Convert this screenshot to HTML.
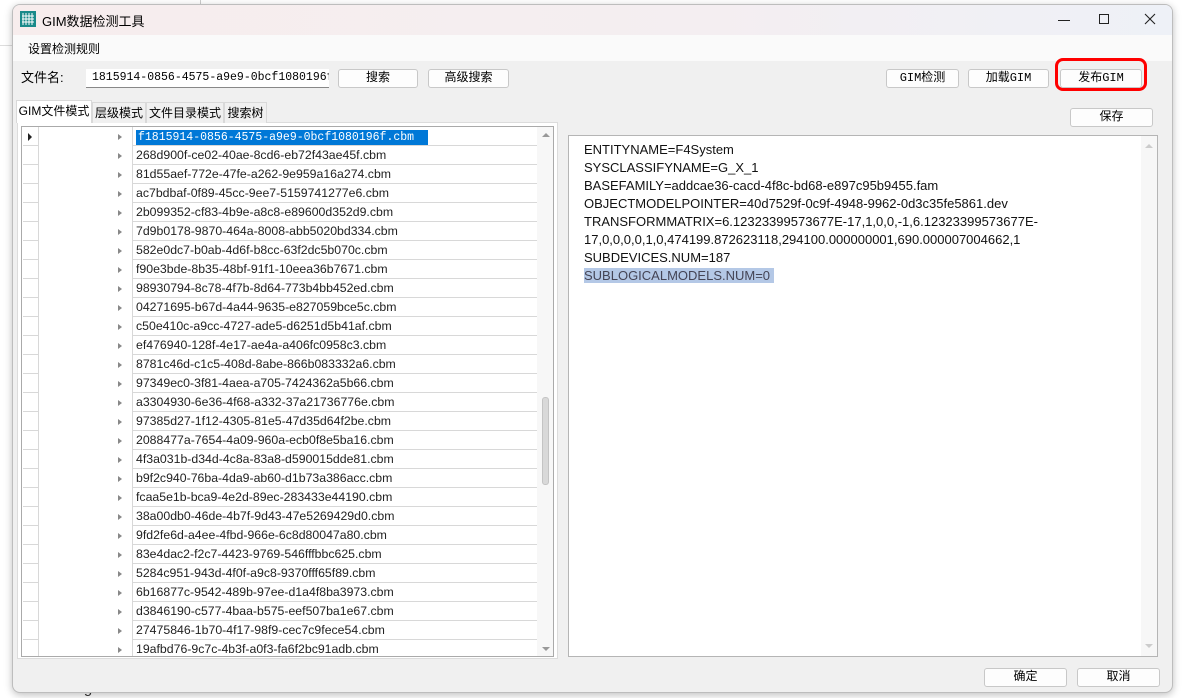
<!DOCTYPE html>
<html><head><meta charset="utf-8"><style>
*{margin:0;padding:0;box-sizing:border-box}
body{width:1184px;height:698px;background:#fff;position:relative;overflow:hidden;font-family:"Liberation Sans","Noto Sans CJK SC",sans-serif;font-size:12px;color:#000}
.a{position:absolute}
.win{left:12px;top:4px;width:1161px;height:689px;background:#f0f0f0;border:1px solid #bdbdbd;border-radius:8px;overflow:hidden;box-shadow:0 2px 8px rgba(0,0,0,.25)}
.btn{position:absolute;background:#fdfdfd;border:1px solid #c8c8c8;border-radius:3px;text-align:center;font-size:12px;line-height:17px;font-family:"Liberation Mono","Noto Sans CJK SC",monospace}
.row{position:absolute;left:0;height:19px;width:535px}
.row .h{position:absolute;left:1px;top:0;width:16px;height:19px;border-bottom:1px solid #d8d8d8;border-right:1px solid #d8d8d8}
.row .t{position:absolute;left:110px;top:0;width:405px;height:19px;border-bottom:1px solid #d8d8d8;border-left:1px solid #d8d8d8;padding-left:3px;line-height:19px;font-size:12.3px;color:#222;white-space:nowrap}
.row .ar{position:absolute;left:96px;top:7px;width:0;height:0;border-left:4px solid #888;border-top:3px solid transparent;border-bottom:3px solid transparent}
.tab{position:absolute;top:97px;height:21px;border:1px solid #d9d9d9;border-bottom:none;background:#f0f0f0;font-size:12px;line-height:20px;text-align:center;white-space:nowrap;overflow:hidden}
.txt{font-size:13px;line-height:18px;color:#111}
</style></head><body>
<div class="a" style="left:200px;top:0;width:1px;height:8px;background:#ccc"></div>
<div class="a" style="left:0;top:45px;width:12px;height:1px;background:#ddd"></div>
<div class="a" style="left:68px;top:680px;font-size:15px;color:#333">Tags</div>
<div class="a win">
 <div class="a" style="left:0;top:0;width:1161px;height:30px;background:linear-gradient(90deg,#f7eded,#f4eef1 60%,#eef1f7)"></div>
 <svg class="a" style="left:7px;top:6px" width="16" height="16" viewBox="0 0 16 16"><rect width="16" height="16" fill="#1a8a8a"/><path d="M3 2v12M6 2v12M9 2v12M12 2v12M2 5h12M2 8h12M2 11h12" stroke="#fff" stroke-width="1"/></svg>
 <div class="a" style="left:29px;top:6px;font-size:13px">GIM数据检测工具</div>
 <div class="a" style="left:1045px;top:15px;width:12px;height:1px;background:#222"></div>
 <div class="a" style="left:1086px;top:9px;width:10px;height:10px;border:1px solid #222"></div>
 <svg class="a" style="left:1131px;top:8px" width="12" height="12"><path d="M1 1L11 11M11 1L1 11" stroke="#222" stroke-width="1.1"/></svg>
 <div class="a" style="left:0;top:30px;width:1161px;height:26px;background:#fafafa"></div>
 <div class="a" style="left:15px;top:35px;font-size:12px">设置检测规则</div>
 <div class="a" style="left:8px;top:62px;font-size:13px">文件名:</div>
 <div class="a" style="left:73px;top:64px;width:243px;height:19px;background:#fff;border-bottom:1px solid #888;font-family:'Liberation Mono',monospace;font-size:11.5px;line-height:18px;padding-left:6px;white-space:nowrap;overflow:hidden">1815914-0856-4575-a9e9-0bcf1080196f.cbm</div>
 <div class="btn" style="left:325px;top:64px;width:80px;height:19px">搜索</div>
 <div class="btn" style="left:415px;top:64px;width:81px;height:19px">高级搜索</div>
 <div class="btn" style="left:873px;top:64px;width:73px;height:19px">GIM检测</div>
 <div class="btn" style="left:955px;top:64px;width:81px;height:19px">加载GIM</div>
 <div class="a" style="left:1042px;top:53px;width:92px;height:33px;border:3px solid #f00;border-radius:8px"></div>
 <div class="btn" style="left:1047px;top:64px;width:82px;height:19px">发布GIM</div>
 <div class="btn" style="left:1057px;top:103px;width:83px;height:19px">保存</div>
 <div class="a" style="left:4px;top:117px;width:541px;height:537px;border:1px solid #dcdcdc;background:#fff"></div>
 <div class="tab" style="left:3px;top:95px;width:76px;height:23px;background:#fff">GIM文件模式</div>
 <div class="tab" style="left:79px;width:54px">层级模式</div>
 <div class="tab" style="left:133px;width:78px">文件目录模式</div>
 <div class="tab" style="left:211px;width:43px">搜索树</div>
 <div class="a" style="left:8px;top:121px;width:533px;height:531px;border:1px solid #aaa;overflow:hidden;background:#fff">
  <div class="a" style="left:17px;top:0;width:93px;height:531px;background:#fff"></div>
  <div class="a" style="left:515px;top:0;width:18px;height:531px;background:#f7f7f7"></div>
  <div class="a" style="left:520px;top:270px;width:7px;height:88px;background:#d9d9d9;border:1px solid #c4c4c4;border-radius:3px"></div>
  <div class="a" style="left:520px;top:6px;width:0;height:0;border-bottom:4px solid #999;border-left:4px solid transparent;border-right:4px solid transparent"></div>
  <div class="a" style="left:520px;top:520px;width:0;height:0;border-top:4px solid #999;border-left:4px solid transparent;border-right:4px solid transparent"></div>
  <div id="rows"></div>
 </div>
 <div class="a" style="left:555px;top:130px;width:590px;height:522px;background:#fff;border:1px solid #b5b5b5">
  <div class="a" style="left:572px;top:0;width:16px;height:520px;background:#f7f7f7"></div>
  <div class="a" style="left:576px;top:8px;width:0;height:0;border-bottom:4px solid #ccc;border-left:4px solid transparent;border-right:4px solid transparent"></div>
  <div class="a" style="left:576px;top:508px;width:0;height:0;border-top:4px solid #ccc;border-left:4px solid transparent;border-right:4px solid transparent"></div>
  <div class="a txt" style="left:15px;top:5px;white-space:nowrap">ENTITYNAME=F4System<br>SYSCLASSIFYNAME=G_X_1<br>BASEFAMILY=addcae36-cacd-4f8c-bd68-e897c95b9455.fam<br>OBJECTMODELPOINTER=40d7529f-0c9f-4948-9962-0d3c35fe5861.dev<br>TRANSFORMMATRIX=6.12323399573677E-17,1,0,0,-1,6.12323399573677E-<br>17,0,0,0,0,1,0,474199.872623118,294100.000000001,690.000007004662,1<br>SUBDEVICES.NUM=187<br><span style="background:#b4c8e6;color:#445;padding-right:4px">SUBLOGICALMODELS.NUM=0</span></div>
 </div>
 <div class="btn" style="left:971px;top:663px;width:83px;height:19px">确定</div>
 <div class="btn" style="left:1064px;top:663px;width:83px;height:19px">取消</div>
</div>
<script>
var n=["f1815914-0856-4575-a9e9-0bcf1080196f.cbm","268d900f-ce02-40ae-8cd6-eb72f43ae45f.cbm","81d55aef-772e-47fe-a262-9e959a16a274.cbm","ac7bdbaf-0f89-45cc-9ee7-5159741277e6.cbm","2b099352-cf83-4b9e-a8c8-e89600d352d9.cbm","7d9b0178-9870-464a-8008-abb5020bd334.cbm","582e0dc7-b0ab-4d6f-b8cc-63f2dc5b070c.cbm","f90e3bde-8b35-48bf-91f1-10eea36b7671.cbm","98930794-8c78-4f7b-8d64-773b4bb452ed.cbm","04271695-b67d-4a44-9635-e827059bce5c.cbm","c50e410c-a9cc-4727-ade5-d6251d5b41af.cbm","ef476940-128f-4e17-ae4a-a406fc0958c3.cbm","8781c46d-c1c5-408d-8abe-866b083332a6.cbm","97349ec0-3f81-4aea-a705-7424362a5b66.cbm","a3304930-6e36-4f68-a332-37a21736776e.cbm","97385d27-1f12-4305-81e5-47d35d64f2be.cbm","2088477a-7654-4a09-960a-ecb0f8e5ba16.cbm","4f3a031b-d34d-4c8a-83a8-d590015dde81.cbm","b9f2c940-76ba-4da9-ab60-d1b73a386acc.cbm","fcaa5e1b-bca9-4e2d-89ec-283433e44190.cbm","38a00db0-46de-4b7f-9d43-47e5269429d0.cbm","9fd2fe6d-a4ee-4fbd-966e-6c8d80047a80.cbm","83e4dac2-f2c7-4423-9769-546fffbbc625.cbm","5284c951-943d-4f0f-a9c8-9370fff65f89.cbm","6b16877c-9542-489b-97ee-d1a4f8ba3973.cbm","d3846190-c577-4baa-b575-eef507ba1e67.cbm","27475846-1b70-4f17-98f9-cec7c9fece54.cbm","19afbd76-9c7c-4b3f-a0f3-fa6f2bc91adb.cbm"];
var h="";n.forEach(function(s,i){var t=i==0?'<span style="background:#0078d7;color:#fff;font-family:Liberation Mono,monospace;font-size:11.5px;padding:1px 14px 1px 2px">'+s+'</span>':s;
h+='<div class="row" style="top:'+(i*19)+'px"><div class="h">'+(i==0?'<div style="position:absolute;left:5px;top:6px;border-left:4px solid #222;border-top:4px solid transparent;border-bottom:4px solid transparent"></div>':'')+'</div><div class="ar"></div><div class="t">'+t+'</div></div>';});
document.getElementById("rows").innerHTML=h;
</script>
</body></html>
